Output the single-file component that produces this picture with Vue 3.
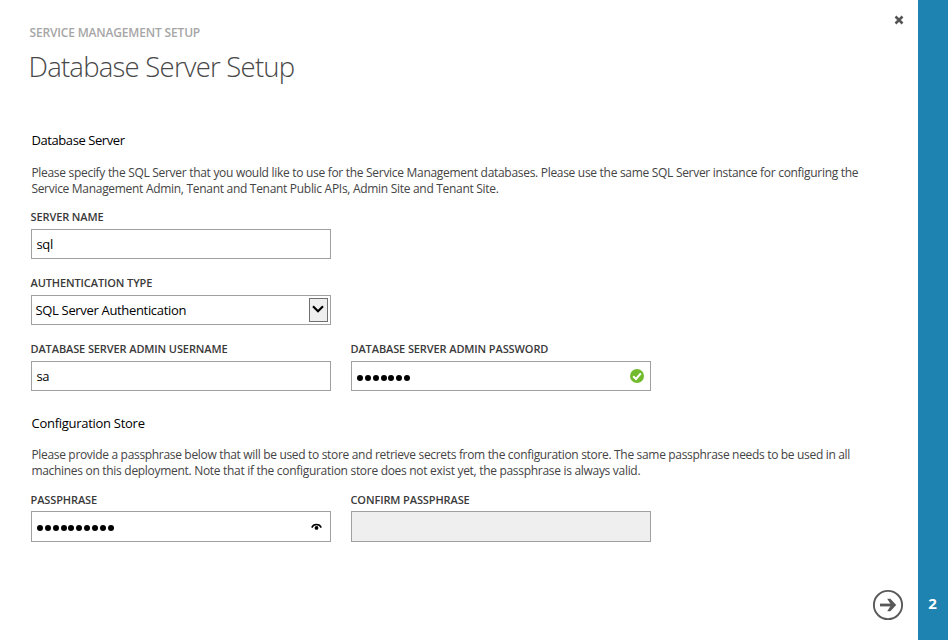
<script setup>
import { ref } from 'vue'

const serverName = ref('sql')
const authType = ref('SQL Server Authentication')
const username = ref('sa')
const passwordLength = 7
const passphraseLength = 10
const step = 2
</script>

<template>
  <div class="wizard">
    <main class="panel">
      <header class="head">
        <div>
          <p class="kicker">SERVICE MANAGEMENT SETUP</p>
          <h1 class="title">Database Server Setup</h1>
        </div>
        <svg class="close" viewBox="0 0 10 10" aria-hidden="true">
          <path d="M1.5 1.5 8.5 8.5M8.5 1.5 1.5 8.5" />
        </svg>
      </header>

      <section class="section database">
        <h2 class="heading">Database Server</h2>
        <p class="copy">
          Please specify the SQL Server that you would like to use for the Service Management databases. Please use the same SQL Server instance for configuring the<br />
          Service Management Admin, Tenant and Tenant Public APIs, Admin Site and Tenant Site.
        </p>
        <div class="row">
          <div class="field">
            <span class="label">SERVER NAME</span>
            <div class="box"><span class="value">{{ serverName }}</span></div>
          </div>
        </div>
        <div class="row">
          <div class="field">
            <span class="label">AUTHENTICATION TYPE</span>
            <div class="box select">
              <span class="value option">{{ authType }}</span>
              <span class="drop">
                <svg viewBox="0 0 12 8" aria-hidden="true"><path d="M1 1.2 6 6.2 11 1.2" /></svg>
              </span>
            </div>
          </div>
        </div>
        <div class="row">
          <div class="field">
            <span class="label">DATABASE SERVER ADMIN USERNAME</span>
            <div class="box"><span class="value">{{ username }}</span></div>
          </div>
          <div class="field">
            <span class="label">DATABASE SERVER ADMIN PASSWORD</span>
            <div class="box">
              <span class="dots"><i v-for="n in passwordLength" :key="n" class="dot"></i></span>
              <svg class="valid" viewBox="0 0 14 14" aria-hidden="true">
                <circle cx="7" cy="7" r="7" />
                <path d="M3.2 7.2 6 10 10.8 4.3" />
              </svg>
            </div>
          </div>
        </div>
      </section>

      <section class="section store">
        <h2 class="heading store-heading">Configuration Store</h2>
        <p class="copy store-copy">
          Please provide a passphrase below that will be used to store and retrieve secrets from the configuration store. The same passphrase needs to be used in all<br />
          <span class="last-line">machines on this deployment. Note that if the configuration store does not exist yet, the passphrase is always valid.</span>
        </p>
        <div class="row">
          <div class="field">
            <span class="label">PASSPHRASE</span>
            <div class="box tall">
              <span class="dots"><i v-for="n in passphraseLength" :key="n" class="dot"></i></span>
              <svg class="reveal" viewBox="0 0 11 8" aria-hidden="true">
                <path d="M.8 4.6C2.4 .6 8.6 .6 10.2 4.6" />
                <circle cx="5.5" cy="4.9" r="1.9" />
              </svg>
            </div>
          </div>
          <div class="field">
            <span class="label">CONFIRM PASSPHRASE</span>
            <div class="box tall disabled"></div>
          </div>
        </div>
      </section>

      <footer class="foot">
        <svg class="next" viewBox="0 0 32 32" aria-hidden="true">
          <circle cx="16" cy="16" r="14.1" />
          <path class="shaft" d="M8 16H22" />
          <path class="tip" d="M15.2 9.8H18.4L24.2 16 18.4 22.2H15.2L19.2 16Z" />
        </svg>
      </footer>
    </main>
    <aside class="steps">{{ step }}</aside>
  </div>
</template>

<style>
body {
  background: #fff;
}
</style>

<style scoped>
.wizard {
  display: flex;
  width: 948px;
  height: 640px;
  overflow: hidden;
  font-family: "Open Sans", "Noto Sans", sans-serif;
  color: #000;
}
.panel {
  display: flex;
  flex-direction: column;
  width: 918px;
  box-sizing: border-box;
  padding: 25px 14px 19px 31px;
}
.head {
  display: flex;
  justify-content: space-between;
  height: 105px;
}
.kicker {
  margin: 0 0 6px -1.5px;
  font-size: 12px;
  font-weight: 600;
  line-height: 16px;
  letter-spacing: -0.17px;
  color: #a6a6a6;
}
.title {
  margin: 0 0 0 -2.5px;
  font-size: 27.5px;
  font-weight: 300;
  line-height: 40px;
  letter-spacing: -0.77px;
  color: #484848;
}
.close {
  width: 10px;
  height: 10px;
  margin: -10px 0 0 0;
}
.close path {
  fill: none;
  stroke: #555;
  stroke-width: 2.5;
}
.section {
  display: flex;
  flex-direction: column;
}
.database {
  height: 283px;
}
.heading {
  margin: 0 0 15px 0.5px;
  font-size: 13px;
  font-weight: 400;
  line-height: 20px;
  letter-spacing: -0.42px;
}
.store-heading {
  margin-bottom: 14px;
  letter-spacing: -0.28px;
}
.copy {
  margin: 0 0 12px 0.4px;
  font-size: 12px;
  line-height: 16px;
  letter-spacing: -0.298px;
  white-space: nowrap;
  color: #444;
}
.store-copy {
  margin-bottom: 13px;
  letter-spacing: -0.322px;
}
.last-line {
  letter-spacing: -0.3px;
}
.row {
  display: flex;
  gap: 20px;
  margin-bottom: 16px;
}
.field {
  display: flex;
  flex-direction: column;
  width: 300px;
}
.label {
  height: 20px;
  margin-left: -0.5px;
  font-size: 11px;
  font-weight: 600;
  line-height: 16px;
  letter-spacing: -0.11px;
  white-space: nowrap;
  color: #3a3a3a;
}
.store .label {
  height: 19px;
}
.box {
  display: flex;
  align-items: center;
  justify-content: space-between;
  height: 30px;
  box-sizing: border-box;
  padding: 0 6px 0 4.5px;
  border: 1px solid #a0a0a0;
  background: #fff;
}
.tall {
  height: 31px;
  padding-right: 8.5px;
}
.disabled {
  background: #efefef;
}
.value {
  font-size: 13px;
  line-height: 18px;
  letter-spacing: -0.35px;
}
.select {
  padding: 0 2px 0 3.5px;
}
.option {
  letter-spacing: -0.33px;
}
.drop {
  display: flex;
  justify-content: center;
  width: 19px;
  height: 24px;
  box-sizing: border-box;
  padding-top: 6px;
  border: 1px solid #707070;
  background: #efefef;
}
.drop svg {
  width: 12px;
  height: 8px;
  margin-left: -1px;
}
.drop path {
  fill: none;
  stroke: #000;
  stroke-width: 2.2;
}
.dots {
  display: flex;
  gap: 1.87px;
  padding: 3px 0 0 0.5px;
}
.tall .dots {
  padding-top: 2px;
}
.dot {
  width: 6px;
  height: 6px;
  border-radius: 50%;
  background: #000;
}
.valid {
  width: 14px;
  height: 14px;
}
.valid circle {
  fill: #72bb2e;
}
.valid path {
  fill: none;
  stroke: #fff;
  stroke-width: 2;
}
.reveal {
  width: 11px;
  height: 8px;
}
.reveal path {
  fill: none;
  stroke: #000;
  stroke-width: 1.5;
}
.foot {
  display: flex;
  justify-content: flex-end;
  margin-top: auto;
}
.next {
  width: 32px;
  height: 32px;
}
.next circle {
  fill: none;
  stroke: #595959;
  stroke-width: 1.9;
}
.next .shaft {
  fill: none;
  stroke: #595959;
  stroke-width: 2.8;
}
.next .tip {
  fill: #595959;
}
.steps {
  display: flex;
  align-items: flex-end;
  justify-content: center;
  width: 30px;
  box-sizing: border-box;
  padding: 0 1px 27px 0;
  background: #1f83b1;
  color: #fff;
  font-size: 15px;
  font-weight: 700;
  line-height: 20px;
}
</style>
